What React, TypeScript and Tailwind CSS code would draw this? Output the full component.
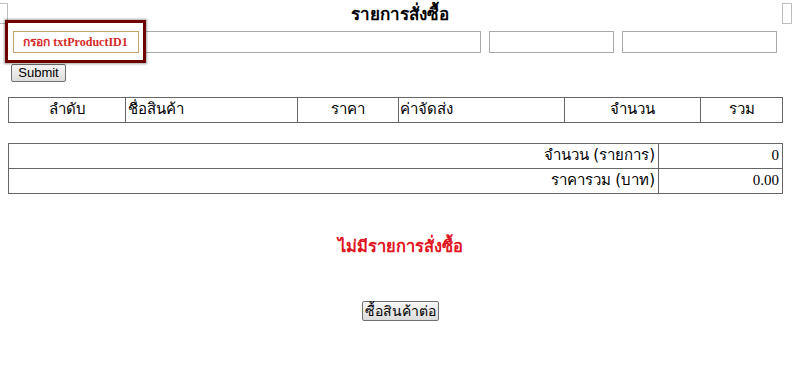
const thai = "font-['Tahoma','DejaVu_Sans','Noto_Sans',sans-serif]";

export default function App() {
  return (
    <div className={`relative w-[800px] h-[374px] overflow-hidden bg-white text-black ${thai}`}>
      {/* stray edge boxes */}
      <div className="absolute left-0 top-[3px] w-[8px] h-[21px] border border-[#bdbdbd] border-l-0" />
      <div className="absolute left-[782px] top-[3px] w-[10px] h-[21px] border border-[#bdbdbd]" />

      <h1 className="h-[31px] pt-[3px] text-center text-[17px] font-bold leading-[22px]">รายการสั่งซื้อ</h1>

      {/* input row */}
      <div className="flex gap-[8px] pl-[12px]">
        <div className="w-[469px] h-[22px] border border-[#a9a9a9]" />
        <div className="w-[125px] h-[22px] border border-[#a9a9a9]" />
        <div className="w-[155px] h-[22px] border border-[#a9a9a9]" />
      </div>

      <div className="flex pl-[11px] pt-[11px]">
        <button className="h-[18px] w-[55px] rounded-[2px] border border-[#707070] bg-gradient-to-b from-[#f6f6f6] to-[#dcdcdc] font-['Liberation_Sans',sans-serif] text-[13px] leading-[14px]">
          Submit
        </button>
      </div>

      {/* header table */}
      <div className="mx-[8px] mt-[15px] grid h-[26px] w-[775px] grid-cols-[116px_172px_101px_166px_136px_1fr] border border-[#666] text-[15px] leading-[23px]">
        <div className="text-center">ลำดับ</div>
        <div className="border-l border-[#666] pl-[2px]">ชื่อสินค้า</div>
        <div className="border-l border-[#666] text-center">ราคา</div>
        <div className="border-l border-[#666] pl-[1px]">ค่าจัดส่ง</div>
        <div className="border-l border-[#666] text-center">จำนวน</div>
        <div className="border-l border-[#666] text-center">รวม</div>
      </div>

      {/* summary table */}
      <div className="mx-[8px] mt-[20px] w-[775px] border border-[#666] text-[15px] leading-[23px]">
        <div className="grid h-[25px] grid-cols-[649px_1fr] border-b border-[#666]">
          <div className="pr-[3px] text-right">จำนวน (รายการ)</div>
          <div className="border-l border-[#666] pr-[3px] text-right font-['Liberation_Serif',serif]">0</div>
        </div>
        <div className="grid h-[24px] grid-cols-[649px_1fr]">
          <div className="pr-[3px] text-right">ราคารวม (บาท)</div>
          <div className="border-l border-[#666] pr-[3px] text-right font-['Liberation_Serif',serif]">0.00</div>
        </div>
      </div>

      <p className="mt-[41px] text-center text-[16.5px] font-bold leading-[24px] text-[#e0141e]">ไม่มีรายการสั่งซื้อ</p>

      <div className="mt-[42px] flex justify-center">
        <button className="h-[20px] w-[77px] rounded-[2px] border border-[#707070] bg-gradient-to-b from-[#f6f6f6] to-[#dcdcdc] text-[14px] leading-[16px]">
          ซื้อสินค้าต่อ
        </button>
      </div>

      {/* highlight overlay on first input */}
      <div className="absolute left-[5px] top-[20px] flex h-[43px] w-[141px] items-center justify-center border-[3px] border-[#6e0000] bg-white shadow-[0_0_2px_1px_rgba(0,0,0,0.35)]">
        <div className="flex h-[22px] w-[126px] items-center justify-center border border-[#c9a26a] font-['Liberation_Serif',serif] text-[12px] font-bold text-[#d42a2a]">
          กรอก txtProductID1
        </div>
      </div>
    </div>
  );
}
